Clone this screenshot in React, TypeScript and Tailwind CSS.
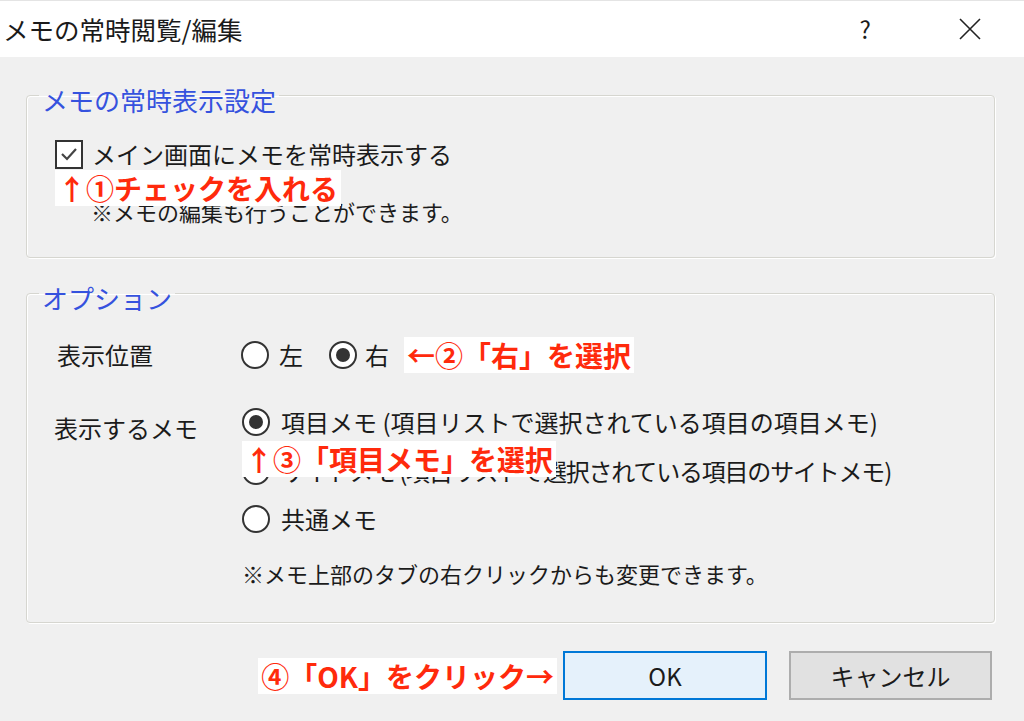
import { ReactNode } from "react";

const font = { fontFamily: '"Noto Sans CJK JP", "Noto Sans", sans-serif' };

function Note({ children, className }: { children: ReactNode; className: string }) {
  return (
    <span
      className={`absolute bg-white px-[3px] text-[28px] font-bold leading-[36px] whitespace-nowrap text-[#ff2a0c] ${className}`}
    >
      {children}
    </span>
  );
}

function Radio({ checked }: { checked?: boolean }) {
  return (
    <span className="flex h-[28px] w-[28px] shrink-0 items-center justify-center rounded-full border-2 border-[#333] bg-white">
      {checked && <span className="h-[14px] w-[14px] rounded-full bg-[#333]" />}
    </span>
  );
}

function Group({ title, children, className }: { title: string; children: ReactNode; className: string }) {
  return (
    <fieldset
      className={`ml-[26px] mr-[29px] rounded-[4px] border border-[#d6d6d0] shadow-[inset_1px_1px_0_#fff,1px_1px_0_#fff] ${className}`}
    >
      <legend className="ml-[12px] px-[3px] pt-[10px] text-[26px] leading-[26px] text-[#3552de]">
        {title}
      </legend>
      {children}
    </fieldset>
  );
}

export default function App() {
  return (
    <div className="h-[721px] w-[1024px] overflow-hidden bg-[#f0f0f0] text-[#1b1b1b]" style={font}>
      {/* title bar */}
      <div className="flex h-[57px] items-center border-t border-[#e4e4e4] bg-white pl-[3px]">
        <span className="text-[25.5px] text-[#1a1a1a]">メモの常時閲覧/編集</span>
        <span className="ml-auto mr-[88px] text-[24px]">?</span>
        <svg width="22" height="22" viewBox="0 0 22 22" className="mr-[43px]">
          <path d="M1 1L21 21M21 1L1 21" stroke="#222" strokeWidth="1.6" />
        </svg>
      </div>

      <Group title="メモの常時表示設定" className="mt-[20px] pb-[31px]">
        <div className="relative pl-[28px] pt-[26px]">
          <label className="flex items-center gap-[9px] text-[24px] leading-[30px]">
            <span className="flex h-[29px] w-[28px] items-center justify-center border-2 border-[#333] bg-white">
              <svg width="18" height="14" viewBox="0 0 18 14">
                <path d="M2 7l5 5L16 2" fill="none" stroke="#444" strokeWidth="2.2" />
              </svg>
            </span>
            メイン画面にメモを常時表示する
          </label>
          <p className="ml-[36px] mt-[27px] text-[22px] leading-[30px]">※メモの編集も行うことができます。</p>
          <Note className="left-[28px] top-[57px]">↑①チェックを入れる</Note>
        </div>
      </Group>

      <Group title="オプション" className="mt-[17px] pb-[34px]">
        <div className="pl-[30px] pt-[26px]">
          <div className="flex items-center text-[24px] leading-[30px]">
            <span className="w-[184px]">表示位置</span>
            <Radio />
            <span className="ml-[10px]">左</span>
            <span className="ml-[26px]"><Radio checked /></span>
            <span className="ml-[8px]">右</span>
            <span className="relative ml-[15px] h-[36px]">
              <Note className="left-0 top-0">←②「右」を選択</Note>
            </span>
          </div>

          <div className="mt-[34px] flex text-[24px] leading-[30px]">
            <span className="-ml-[3px] mr-[3px] w-[185px] pt-[6px]">表示するメモ</span>
            <div className="relative flex flex-col">
              <div className="flex items-center gap-[11px]">
                <Radio checked />
                項目メモ (項目リストで選択されている項目の項目メモ)
              </div>
              <div className="mt-[19px] flex items-center gap-[11px] tracking-[-1.2px]">
                <Radio />
                サイトメモ (項目リストで選択されている項目のサイトメモ)
              </div>
              <div className="mt-[18px] flex items-center gap-[11px]">
                <Radio />
                共通メモ
              </div>
              <p className="mt-[24px] text-[22px]">※メモ上部のタブの右クリックからも変更できます。</p>
              <Note className="left-0 top-[34px]">↑③「項目メモ」を選択</Note>
            </div>
          </div>
        </div>
      </Group>

      <div className="mr-[32px] mt-[28px] flex items-center justify-end">
        <span className="relative mr-[6px] h-[40px] w-[308px]">
          <Note className="right-0 top-[2px]">④「OK」をクリック→</Note>
        </span>
        <button className="h-[49px] w-[204px] border-2 border-[#0078d7] bg-[#e5f1fb] text-[24px]">OK</button>
        <button className="ml-[22px] h-[49px] w-[203px] border-2 border-[#adadad] bg-[#e1e1e1] text-[24px]">
          キャンセル
        </button>
      </div>
    </div>
  );
}
